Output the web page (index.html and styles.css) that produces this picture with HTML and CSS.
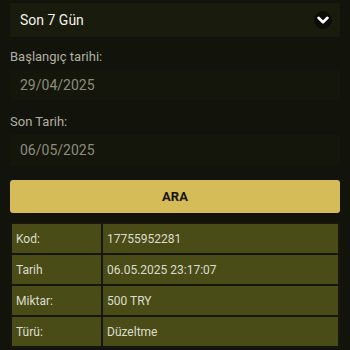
FILE: index.html
```html
<!DOCTYPE html>
<html>
<head>
<meta charset="utf-8">
<link rel="stylesheet" href="styles.css">
</head>
<body>
<div class="page">
  <div class="select">
    <span class="select-text">Son 7 Gün</span>
    <span class="chev">
      <svg width="18" height="18" viewBox="0 0 18 18"><path d="M4.5 6.8 L9 11.2 L13.5 6.8" fill="none" stroke="#ffffff" stroke-width="2.6" stroke-linecap="round" stroke-linejoin="round"/></svg>
    </span>
  </div>
  <div class="label first">Başlangıç tarihi:</div>
  <div class="input">29/04/2025</div>
  <div class="label">Son Tarih:</div>
  <div class="input">06/05/2025</div>
  <button class="btn">ARA</button>
  <table class="info">
    <tr><td class="k">Kod:</td><td class="v">17755952281</td></tr>
    <tr><td class="k">Tarih</td><td class="v">06.05.2025 23:17:07</td></tr>
    <tr><td class="k">Miktar:</td><td class="v">500 TRY</td></tr>
    <tr><td class="k">Türü:</td><td class="v">Düzeltme</td></tr>
  </table>
</div>
</body>
</html>
```

FILE: styles.css
```css
html, body {
  margin: 0;
  padding: 0;
  background: #12130a;
  font-family: Roboto, "Liberation Sans", sans-serif;
}
.page {
  padding: 3px 10px 0 10px;
  display: flex;
  flex-direction: column;
}
.select {
  height: 34px;
  background: #191b0c;
  border-radius: 2px;
  display: flex;
  align-items: center;
  justify-content: space-between;
  padding: 0 8px 0 10px;
}
.select-text {
  color: #f2f2ea;
  font-size: 14px;
}
.chev {
  width: 18px;
  height: 18px;
  border-radius: 50%;
  background: #0c0d06;
  display: flex;
  align-items: center;
  justify-content: center;
}
.chev svg { display: block; }
.label {
  color: #b0b0a2;
  font-size: 13px;
  line-height: 16px;
  margin-top: 14px;
}
.label.first { margin-top: 12px; }
.input {
  margin-top: 5px;
  height: 30px;
  background: #14160b;
  color: #8c8c7c;
  font-size: 14px;
  display: flex;
  align-items: center;
  padding-left: 10px;
}
.btn {
  margin-top: 15px;
  height: 33px;
  border: none;
  border-radius: 3px;
  background: #d5bc58;
  color: #15150c;
  font-family: Roboto, "Liberation Sans", sans-serif;
  font-weight: bold;
  font-size: 13px;
  padding: 0;
}
.info {
  margin-top: 9px;
  width: 330px;
  border-collapse: separate;
  border-spacing: 2px;
  background: #15160c;
}
.info td {
  background: #4a4c17;
  color: #dcdccc;
  font-size: 12px;
  height: 29px;
  padding: 0 0 0 4px;
  vertical-align: middle;
}
.info td.k { width: 85px; }
```
